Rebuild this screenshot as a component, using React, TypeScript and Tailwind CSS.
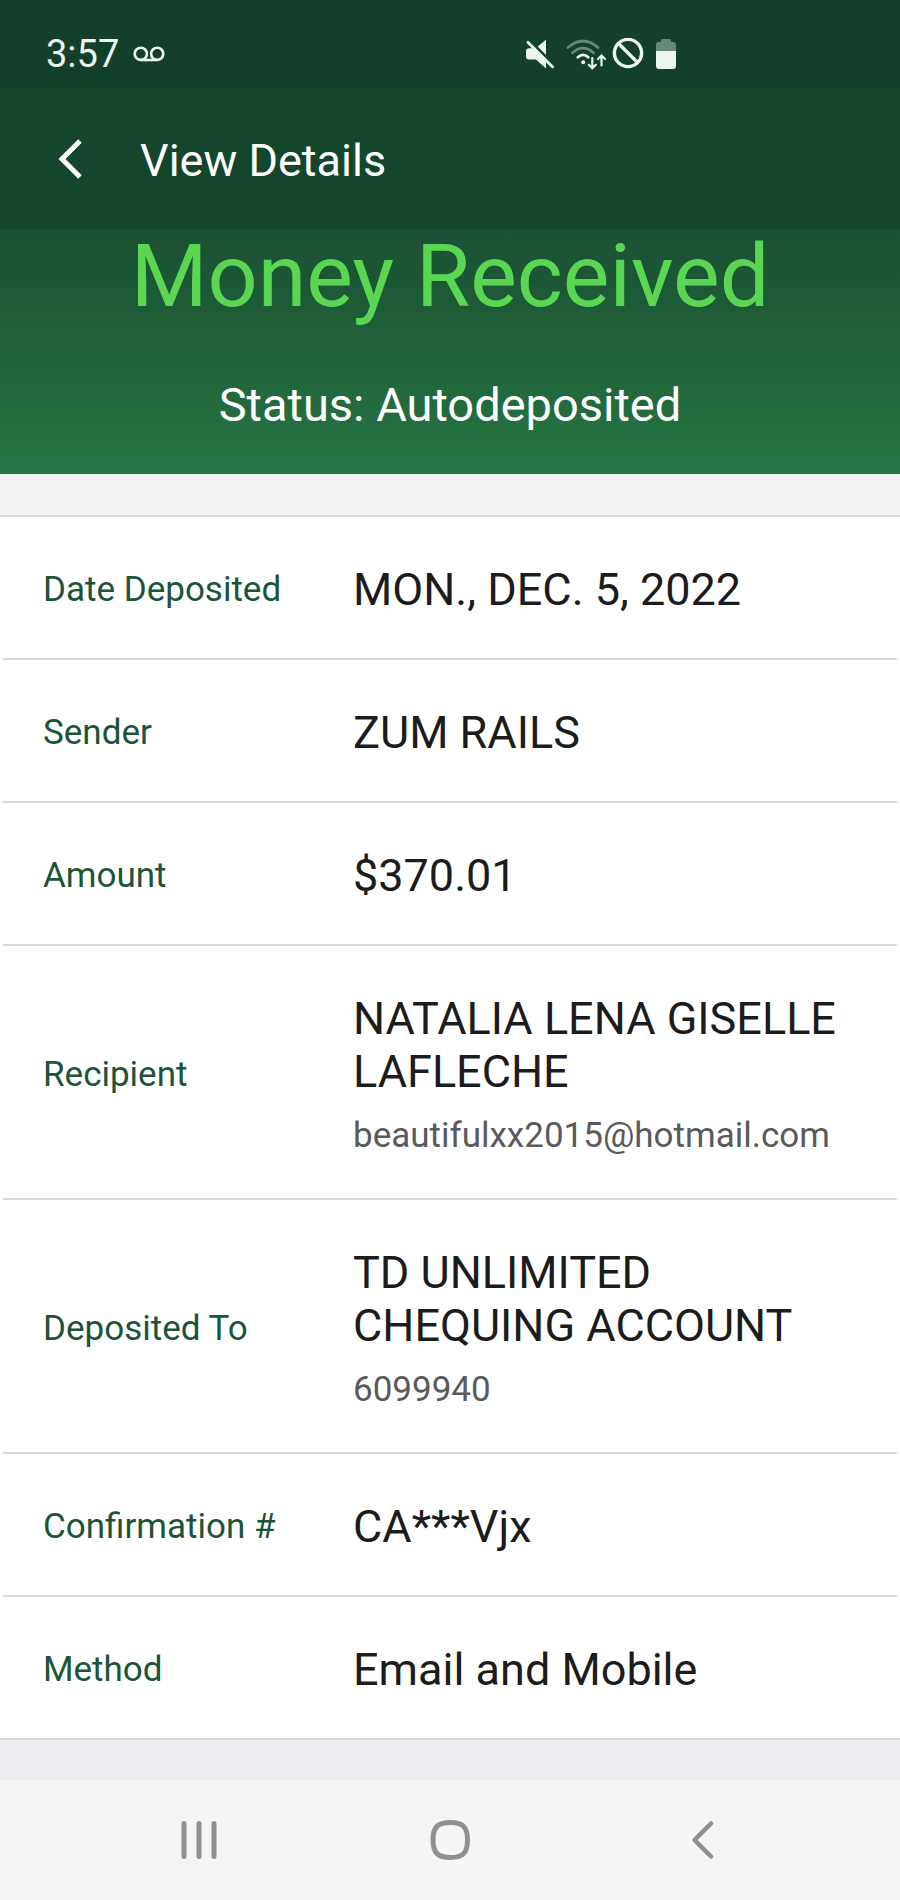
import React from 'react';

interface Detail {
  label: string;
  value: string;
  note?: string;
}

const details: Detail[] = [
  { label: 'Date Deposited', value: 'MON., DEC. 5, 2022' },
  { label: 'Sender', value: 'ZUM RAILS' },
  { label: 'Amount', value: '$370.01' },
  { label: 'Recipient', value: 'NATALIA LENA GISELLE LAFLECHE', note: 'beautifulxx2015@hotmail.com' },
  { label: 'Deposited To', value: 'TD UNLIMITED CHEQUING ACCOUNT', note: '6099940' },
  { label: 'Confirmation #', value: 'CA***Vjx' },
  { label: 'Method', value: 'Email and Mobile' },
];

const VoicemailIcon = () => (
  <svg className="w-8 h-4" viewBox="0 0 32 16" fill="none" stroke="currentColor" strokeWidth="2.6">
    <circle cx="7.8" cy="7.8" r="6.1" />
    <circle cx="24.2" cy="7.8" r="6.1" />
    <path d="M7.8 14h16.4" />
  </svg>
);

const MuteIcon = () => (
  <svg className="w-7 h-8" viewBox="0 0 28 32" fill="currentColor">
    <path d="M20 1.700v15.500L11.300 8.700z" />
    <path d="M3 10.300h5L20 22v8.600L10 21.500H3c-2 0-3-1-3-3v-5c0-2 1-3.200 3-3.200z" />
    <path d="M3.500 2.500l25 25" stroke="#12402a" strokeWidth="3" />
    <path d="M1.900 4.200l24.800 24.800" stroke="currentColor" strokeWidth="2.800" strokeLinecap="round" />
  </svg>
);

const WifiIcon = () => (
  <svg className="w-10 h-8" viewBox="0 0 40 32" fill="none" stroke="currentColor" strokeWidth="2.800" strokeLinecap="round">
    <g opacity="0.4">
      <path d="M2 9.500Q17 -3.500 32 9.500" />
      <path d="M6.500 14.800Q17 5.500 27.500 14.800" />
    </g>
    <path d="M11.800 19.300Q17 14.500 22.300 19.300" />
    <circle cx="17.200" cy="24.300" r="2" fill="currentColor" stroke="none" />
    <path d="M26.300 20V30M22.800 26.800l3.500 3.500 3.500-3.500M35.500 27.500V18M32 21l3.500-3.500 3.500 3.500" strokeWidth="2.200" />
  </svg>
);

const BlockIcon = () => (
  <svg className="w-8 h-8" viewBox="0 0 32 32" fill="none" stroke="currentColor" strokeWidth="3.400">
    <circle cx="16" cy="15" r="13.600" />
    <path d="M6.500 5.500l19 19" />
  </svg>
);

const BatteryIcon = () => (
  <svg className="w-5 h-8" viewBox="0 0 20 32" fill="currentColor">
    <path opacity="0.4" d="M6.500 1h7a1.500 1.500 0 0 1 1.500 1.500V4h2a3 3 0 0 1 3 3v6H0V7a3 3 0 0 1 3-3h2V2.500A1.500 1.500 0 0 1 6.500 1z" />
    <path d="M0 13h20v15a3 3 0 0 1-3 3H3a3 3 0 0 1-3-3z" />
  </svg>
);

const StatusBar = () => (
  <div className="flex items-center h-22 pt-5 pl-[46px] pr-[224px] bg-[#12402a] text-[#ecf5ef]">
    <span className="text-[38px] leading-[44px] mr-[14px]">3:57</span>
    <VoicemailIcon />
    <div className="flex items-center ml-auto">
      <MuteIcon />
      <div className="ml-3 mr-[6px]"><WifiIcon /></div>
      <BlockIcon />
      <div className="ml-3"><BatteryIcon /></div>
    </div>
  </div>
);

const DetailRow: React.FC<Detail> = ({ label, value, note }) => (
  <div className="flex items-center mx-[3px] px-10 pt-[46px] pb-[42px] border-b-2 border-[#d9d9d9] last:mx-0 last:px-[43px]">
    <dt className="w-[310px] shrink-0 text-[35px] leading-[53px] text-[#1c5439]">{label}</dt>
    <dd className="text-[#1c1c1c]">
      <div className="text-[45px] leading-[53px]">{value}</div>
      {note && <div className="mt-[17px] text-[35px] leading-[41px] text-[#5a5a5a]">{note}</div>}
    </dd>
  </div>
);

export default function App() {
  return (
    <div className="min-h-screen flex flex-col bg-[#eeeef2] font-[Roboto,sans-serif]">
      <StatusBar />
      <header className="flex items-center h-[141px] px-[46px] bg-[#13462c] text-white">
        <button type="button" aria-label="Back" className="w-12 h-12 mr-[46px] flex items-center justify-center">
          <svg className="w-6 h-10" viewBox="0 0 24 40" fill="none" stroke="currentColor" strokeWidth="5">
            <path d="M22 2L4 20l18 18" />
          </svg>
        </button>
        <h1 className="pt-1 text-[45px] leading-[53px]">View Details</h1>
      </header>

      <section className="h-[245px] bg-linear-to-b from-[#1a5032] to-[#267643] text-center">
        <h2 className="text-[88px] leading-[94px] text-[#5bd653]">Money Received</h2>
        <p className="mt-[54px] text-[47px] leading-[56px] text-white">Status: Autodeposited</p>
      </section>

      <div className="h-[43px] bg-[#f2f2f2] border-b-2 border-[#d9d9d9]" />
      <dl className="bg-white">
        {details.map((item) => (
          <DetailRow key={item.label} {...item} />
        ))}
      </dl>

      <nav className="mt-10 grow grid grid-cols-3 items-center px-[72px] h-[120px] bg-[#f5f5f5] text-[#909090]">
        <button type="button" aria-label="Recent apps" className="flex justify-center">
          <svg className="w-10 h-10" viewBox="0 0 40 40" fill="none" stroke="currentColor" strokeWidth="5" strokeLinecap="round">
            <path d="M6 3.500v33M21 3.500v33M36 3.500v33" />
          </svg>
        </button>
        <button type="button" aria-label="Home" className="flex justify-center">
          <svg className="w-10 h-10" viewBox="0 0 40 40" fill="none" stroke="currentColor" strokeWidth="5">
            <path d="M20.500 2.500C33 2.500 37.500 7 37.500 20S33 37.500 20.500 37.500 3 33 3 20 7.500 2.500 20.500 2.500z" />
          </svg>
        </button>
        <button type="button" aria-label="Back to previous screen" className="flex justify-center">
          <svg className="w-10 h-10" viewBox="0 0 40 40" fill="none" stroke="currentColor" strokeWidth="4.500" strokeLinecap="round" strokeLinejoin="round">
            <path d="M29 3.500L12.500 20 29 36.500" />
          </svg>
        </button>
      </nav>
    </div>
  );
}
